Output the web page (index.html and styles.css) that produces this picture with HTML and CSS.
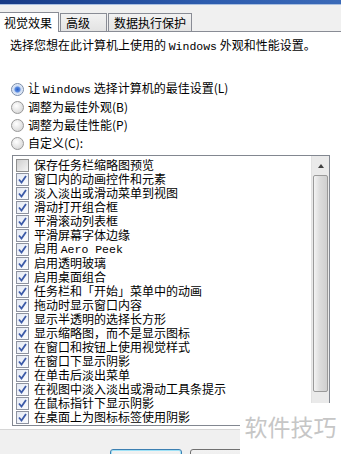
FILE: index.html
```html
<!DOCTYPE html>
<html lang="zh-CN">

<head>
    <meta charset="UTF-8">
    <meta name="viewport" content="width=device-width, initial-scale=1.0">
    <title>性能选项</title>
    <link rel="stylesheet" href="styles.css">
</head>

<body>
    <div class="window">
        <div class="titlebar"></div>

        <div class="tabs">
            <div class="tab active">视觉效果</div>
            <div class="tab">高级</div>
            <div class="tab">数据执行保护</div>
        </div>

        <div class="panel">
            <p class="intro">选择您想在此计算机上使用的 <span class="lat">Windows</span> 外观和性能设置。</p>

            <div class="radios">
                <div class="radio-row"><span class="radio on"></span><span class="label">让 <span class="lat">Windows</span> 选择计算机的最佳设置(L)</span></div>
                <div class="radio-row"><span class="radio"></span><span class="label">调整为最佳外观(B)</span></div>
                <div class="radio-row"><span class="radio"></span><span class="label">调整为最佳性能(P)</span></div>
                <div class="radio-row"><span class="radio"></span><span class="label">自定义(C):</span></div>
            </div>

            <div class="listbox">
                <ul class="items" id="items"></ul>
                <div class="scrollbar">
                    <div class="sb-up"><span class="arrow"></span></div>
                    <div class="sb-thumb"></div>
                    <div class="sb-track"></div>
                </div>
            </div>
        </div>

        <div class="footer">
            <button class="btn default">确定</button>
            <button class="btn">取消</button>
        </div>

        <div class="watermark">软件技巧</div>
    </div>

    <script>
        const options = [
            ["保存任务栏缩略图预览", false],
            ["窗口内的动画控件和元素", true],
            ["淡入淡出或滑动菜单到视图", true],
            ["滑动打开组合框", true],
            ["平滑滚动列表框", true],
            ["平滑屏幕字体边缘", true],
            ["启用 <span class=\"lat\">Aero Peek</span>", true],
            ["启用透明玻璃", true],
            ["启用桌面组合", true],
            ["任务栏和「开始」菜单中的动画", true],
            ["拖动时显示窗口内容", true],
            ["显示半透明的选择长方形", true],
            ["显示缩略图，而不是显示图标", true],
            ["在窗口和按钮上使用视觉样式", true],
            ["在窗口下显示阴影", true],
            ["在单击后淡出菜单", true],
            ["在视图中淡入淡出或滑动工具条提示", true],
            ["在鼠标指针下显示阴影", true],
            ["在桌面上为图标标签使用阴影", true]
        ]

        const check = '<svg viewBox="0 0 9 9" width="9" height="9"><path d="M1 4.5 L3.5 7.5 L8 1" fill="none" stroke="#3c5aa8" stroke-width="1.8"/></svg>'

        const ul = document.getElementById("items")
        options.forEach(item => {
            const li = document.createElement("li")
            li.className = "item"
            li.innerHTML = '<span class="box' + (item[1] ? ' checked">' + check : '">') + '</span><span class="label">' + item[0] + '</span>'
            ul.appendChild(li)
        })
    </script>
</body>

</html>
```

FILE: styles.css
```css
html,
body {
    margin: 0;
    padding: 0;
    background-color: #f0f0f0;
}

body {
    font-family: "Noto Sans CJK SC", "Liberation Sans", sans-serif;
    font-size: 12px;
    line-height: 14px;
    color: #000;
}

.window {
    position: relative;
    width: 341px;
    height: 454px;
    overflow: hidden;
}

.lat {
    font-family: "Liberation Mono", monospace;
    font-size: 11.5px;
    line-height: 14px;
}

.label {
    white-space: pre;
    line-height: 14px;
}

.titlebar {
    height: 4px;
    background: linear-gradient(to right, #173a86, #2d5cae 60%, #3b6ab8);
    border-bottom: 1px solid #a9bfe0;
}

.tabs {
    display: flex;
    height: 26px;
    align-items: flex-end;
    border-bottom: 1px solid #898c95;
    background-color: #f0f0f0;
}

.tab {
    height: 18px;
    line-height: 17px;
    padding: 0 5px;
    border: 1px solid #898c95;
    border-bottom: none;
    margin-right: 1px;
    background: linear-gradient(#f2f2f2, #e3e3e3);
    box-sizing: border-box;
    white-space: nowrap;
}

.tab:nth-child(2) {
    width: 47px;
}

.tab.active {
    height: 20px;
    line-height: 19px;
    margin-bottom: -1px;
    background: #fff;
    border-left: none;
    width: 59px;
    padding: 0 0 0 4px;
}

.panel {
    background-color: #fff;
    padding: 6px 11px 3px 10px;
    border-bottom: 1px solid #d6d6d6;
}

.intro {
    margin: 0;
    white-space: nowrap;
}

.radios {
    margin-top: 26px;
}

.radio-row {
    display: flex;
    align-items: center;
    height: 18px;
}

.radio {
    width: 11px;
    height: 11px;
    border-radius: 50%;
    border: 1px solid #989898;
    background: radial-gradient(circle at 40% 35%, #ffffff, #d8d8d8 80%);
    margin: 0 4px 0 1px;
    flex: none;
}

.radio.on {
    background: radial-gradient(circle, #2a60c9 0, #5a8be0 2.5px, #c9d9f2 3.5px, #eef3fb 6px);
    border-color: #7a8ca8;
}

.listbox {
    display: flex;
    margin: 3px 0 0 2px;
    height: 271px;
    border: 1px solid #828790;
    box-sizing: border-box;
    background-color: #fff;
}

.items {
    flex: 1;
    list-style: none;
    margin: 0;
    padding: 2px 0 0 3px;
}

.item {
    display: flex;
    align-items: center;
    height: 14px;
}

.box {
    width: 11px;
    height: 11px;
    border: 1px solid #8e8f8f;
    background: linear-gradient(135deg, #cfcfcf, #f4f4f4);
    margin-right: 5px;
    display: flex;
    align-items: center;
    justify-content: center;
    flex: none;
}

.box.checked {
    background: linear-gradient(135deg, #e4e9f3, #fbfcfe);
    border-color: #8e93a0;
}

.scrollbar {
    width: 17px;
    display: flex;
    flex-direction: column;
    background-color: #eaeaea;
    border-left: 1px solid #e2e2e2;
}

.sb-up {
    height: 19px;
    display: flex;
    align-items: center;
    justify-content: center;
}

.arrow {
    width: 0;
    height: 0;
    border-left: 3px solid transparent;
    border-right: 3px solid transparent;
    border-bottom: 4px solid #404040;
}

.sb-thumb {
    height: 215px;
    margin: 0 1px;
    border: 1px solid #9a9a9a;
    border-radius: 2px;
    background: linear-gradient(to right, #f3f3f3, #dcdcdc 45%, #cfcfcf);
}

.sb-track {
    flex: 1;
}

.footer {
    display: flex;
    padding: 19px 0 0 110px;
    gap: 8px;
}

.btn {
    width: 72px;
    height: 23px;
    font-family: inherit;
    font-size: 12px;
    border: 1px solid #707070;
    border-radius: 3px;
    background: linear-gradient(#f2f2f2, #ebebeb 50%, #dddddd 51%, #cfcfcf);
    padding: 0;
    line-height: 20px;
}

.btn.default {
    border-color: #3c7fb1;
    box-shadow: inset 0 0 0 1px #9fe2f7;
}

.watermark {
    position: absolute;
    right: 0;
    bottom: 0;
    width: 101px;
    height: 51px;
    background-color: #fff;
    color: #c6c6c6;
    font-size: 23px;
    line-height: 46px;
    text-align: center;
}
```
